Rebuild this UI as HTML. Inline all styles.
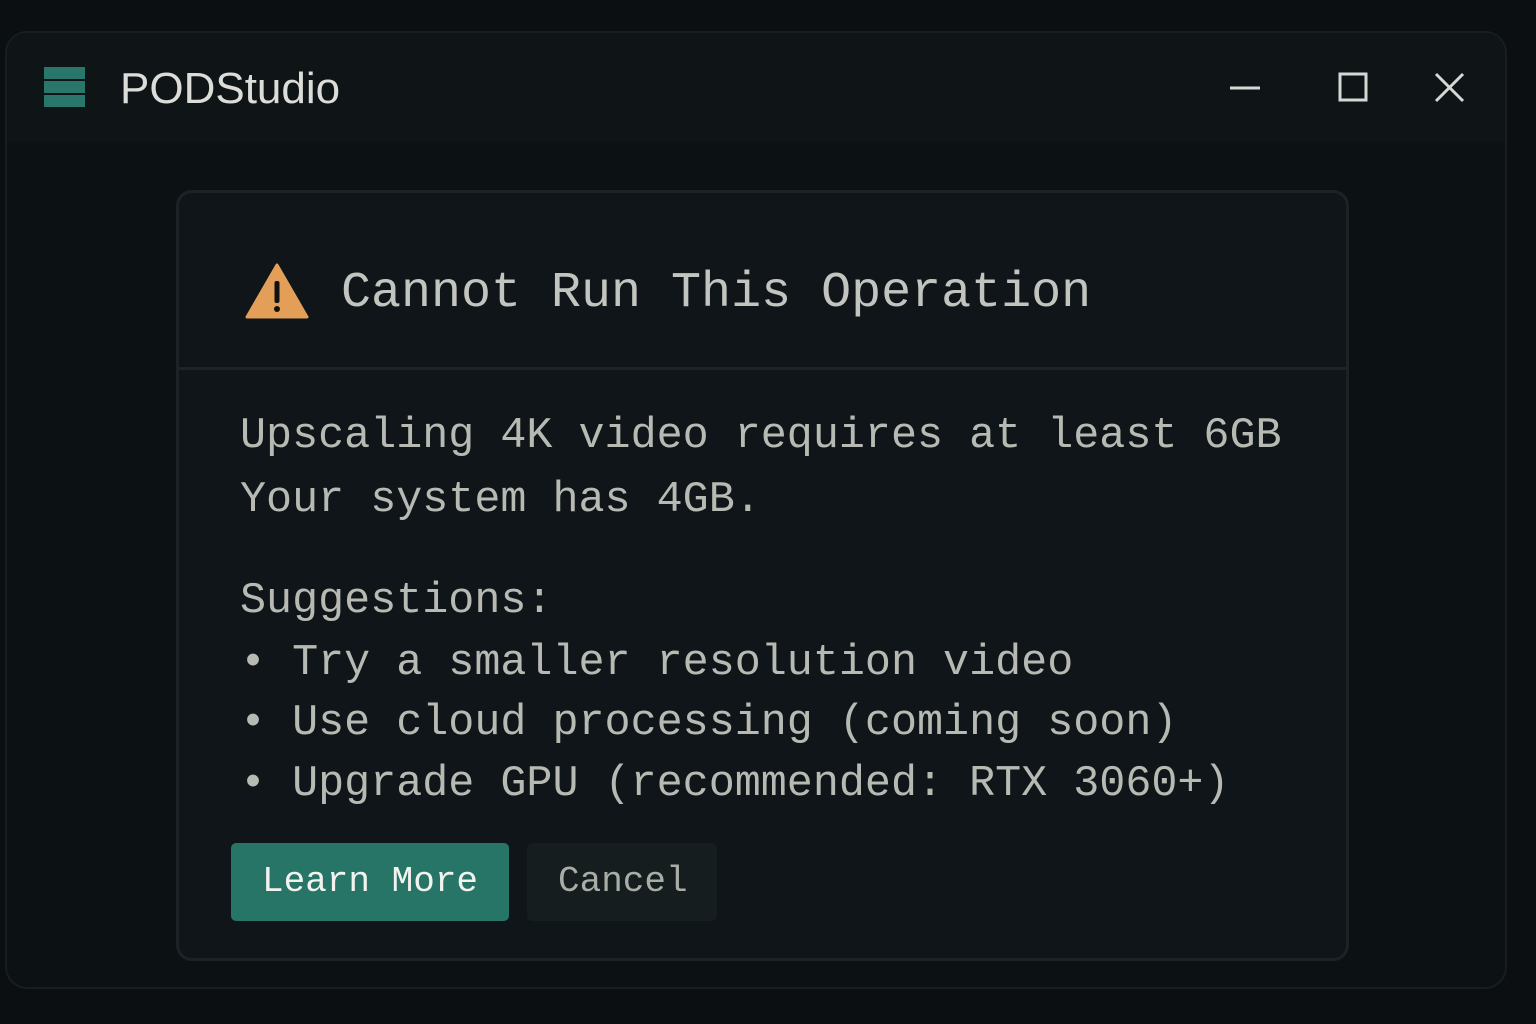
<!DOCTYPE html>
<html><head><style>
html,body{margin:0;width:1536px;height:1024px;background:#0b0f11;overflow:hidden;font-family:"Liberation Mono",monospace}
.win{position:absolute;left:5px;top:31px;width:1502px;height:958px;border-radius:22px;background:#0c1113;border:2px solid #161e21;box-sizing:border-box;overflow:hidden}
.tb{position:absolute;left:0;top:0;right:0;height:109px;background:#0f1517}
.logo{position:absolute;left:37px;top:34px;width:41px}
.logo div{height:12px;background:#28776a;margin-bottom:2px}
.name{position:absolute;left:113px;top:31px;font-family:"Liberation Sans",sans-serif;font-size:44px;color:#dcddd8}
.dlg{position:absolute;left:176px;top:190px;width:1173px;height:771px;border:3px solid #1b2327;border-radius:16px;background:#0f1518;box-sizing:border-box}
.hd{position:absolute;left:0;right:0;top:0;height:174px;border-bottom:3px solid #1c2428}
.tt{position:absolute;left:162px;top:72px;font-size:50px;color:#c2c5bf;white-space:pre}
.bd{position:absolute;left:61px;color:#b7bab3;font-size:43.4px;white-space:pre}
.btn{position:absolute;top:650px;height:78px;border-radius:5px;font-size:36px;line-height:78px;box-sizing:border-box;padding-left:31px}
</style></head><body>
<div class="win">
 <div class="tb">
  <div class="logo"><div></div><div></div><div></div></div>
  <div class="name">PODStudio</div>
  <svg style="position:absolute;left:1215px;top:35px" width="250" height="40" fill="none" stroke="#d6d8d4" stroke-width="3">
   <line x1="8" y1="20" x2="38" y2="20"/>
   <rect x="118" y="6" width="26" height="26"/>
   <line x1="214" y1="6" x2="241" y2="33"/><line x1="241" y1="6" x2="214" y2="33"/>
  </svg>
 </div>
</div>
<div class="dlg">
 <div class="hd">
  <svg style="position:absolute;left:66px;top:70px" width="64" height="56" viewBox="0 0 64 56"><path d="M32 2 L62 54 L2 54 Z" fill="#e39f58" stroke="#e39f58" stroke-width="3" stroke-linejoin="round"/><rect x="29.5" y="18" width="5" height="22" rx="2" fill="#111"/><circle cx="32" cy="46" r="3" fill="#111"/></svg>
  <div class="tt">Cannot Run This Operation</div>
 </div>
 <div class="bd" style="top:219px">Upscaling 4K video requires at least 6GB</div>
 <div class="bd" style="top:283px">Your system has 4GB.</div>
 <div class="bd" style="top:384px">Suggestions:</div>
 <div class="bd" style="top:446px">• Try a smaller resolution video</div>
 <div class="bd" style="top:506px">• Use cloud processing (coming soon)</div>
 <div class="bd" style="top:567px">• Upgrade GPU (recommended: RTX 3060+)</div>
 <div class="btn" style="left:52px;width:278px;background:#277567;color:#f2f3ef">Learn More</div>
 <div class="btn" style="left:348px;width:190px;background:#151d1f;color:#a9ada6">Cancel</div>
</div>
</body></html>
